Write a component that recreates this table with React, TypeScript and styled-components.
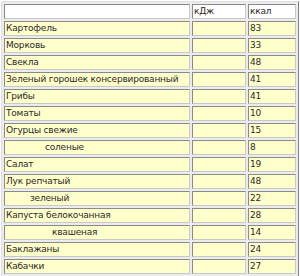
import React from "react";
import styled, { createGlobalStyle } from "styled-components";

const Global = createGlobalStyle`
  html, body { margin: 0; padding: 0; background: #ffffff; }
  body { font-family: "DejaVu Sans", Verdana, sans-serif; }
`;

const Table = styled.table`
  margin: 1px 0 0 1px;
  width: 298px;
  border-collapse: separate;
  border-spacing: 2px;
  border: 1px solid;
  border-color: #e0e0e0 #808080 #808080 #e0e0e0;
  background: #ececec;
  table-layout: fixed;
  font-family: "DejaVu Sans", Verdana, sans-serif;
  font-size: 9px;
  letter-spacing: -0.2px;
  color: #2a2a2a;
`;

const Cell = styled.td<{ $head?: boolean; $indent?: number }>`
  height: 13px;
  padding: 0 0 0 ${(p) => 1 + (p.$indent ?? 0)}px;
  border: 1px solid;
  border-color: #8a8a8a #c8c8c8 #c8c8c8 #8a8a8a;
  background: ${(p) => (p.$head ? "#ffffff" : "#ffffcc")};
  white-space: nowrap;
  overflow: hidden;
  line-height: 13px;
  vertical-align: middle;
`;

const rows: [string, string, number][] = [
  ["Картофель", "83", 0],
  ["Морковь", "33", 0],
  ["Свекла", "48", 0],
  ["Зеленый горошек консервированный", "41", 0],
  ["Грибы", "41", 0],
  ["Томаты", "10", 0],
  ["Огурцы свежие", "15", 0],
  ["соленые", "8", 39],
  ["Салат", "19", 0],
  ["Лук репчатый", "48", 0],
  ["зеленый", "22", 24],
  ["Капуста белокочанная", "28", 0],
  ["квашеная", "14", 46],
  ["Баклажаны", "24", 0],
  ["Кабачки", "27", 0],
];

export default function App() {
  return (
    <>
      <Global />
      <Table>
        <colgroup>
          <col style={{ width: 186 }} />
          <col style={{ width: 54 }} />
          <col />
        </colgroup>
        <tbody>
          <tr>
            <Cell $head />
            <Cell $head>кДж</Cell>
            <Cell $head>ккал</Cell>
          </tr>
          {rows.map(([name, kcal, indent]) => (
            <tr key={name}>
              <Cell $indent={indent}>{name}</Cell>
              <Cell />
              <Cell>{kcal}</Cell>
            </tr>
          ))}
        </tbody>
      </Table>
    </>
  );
}
